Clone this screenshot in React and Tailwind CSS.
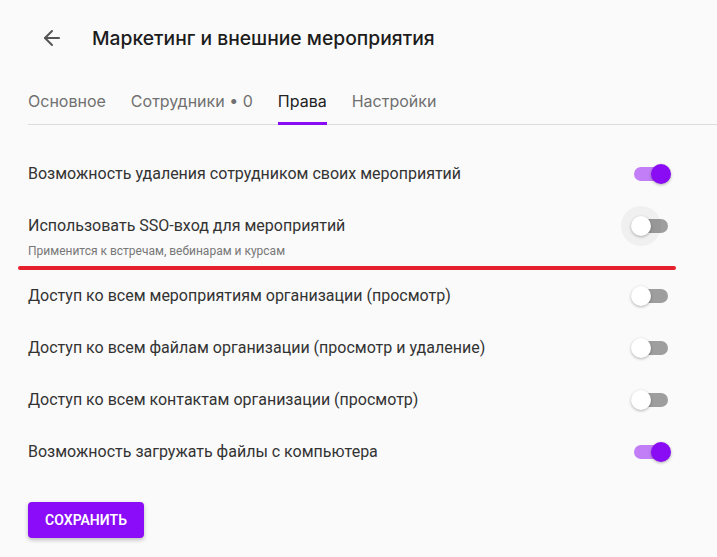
import { ArrowLeft } from "lucide-react";

const rows = [
  { label: "Возможность удаления сотрудником своих мероприятий", on: true },
  {
    label: "Использовать SSO-вход для мероприятий",
    hint: "Применится к встречам, вебинарам и курсам",
    on: false,
    focus: true,
  },
  { label: "Доступ ко всем мероприятиям организации (просмотр)", on: false },
  { label: "Доступ ко всем файлам организации (просмотр и удаление)", on: false },
  { label: "Доступ ко всем контактам организации (просмотр)", on: false },
  { label: "Возможность загружать файлы с компьютера", on: true },
];

const tabs = ["Основное", "Сотрудники • 0", "Права", "Настройки"];

function Switch({ on, focus }) {
  return (
    <div className={`relative w-[34px] h-[14px] rounded-full ${on ? "bg-[#c27ef7]" : "bg-[#9e9e9e]"}`}>
      {focus && (
        <span className="absolute -top-[13px] -left-[13px] w-[40px] h-[40px] rounded-full bg-black/[0.04]" />
      )}
      <span
        className={`absolute -top-[3px] w-[20px] h-[20px] rounded-full shadow-[0_1px_3px_rgba(0,0,0,0.3)] ${
          on ? "-right-[3px] bg-[#8a0cf5]" : "-left-[3px] bg-white"
        }`}
      />
    </div>
  );
}

export default function App() {
  return (
    <div className="min-h-[557px] bg-[#fafafa] font-['Inter',sans-serif]">
      <div className="flex items-center h-[76px] pl-[40px]">
        <ArrowLeft size={24} strokeWidth={2} className="text-[#555]" />
        <h1 className="ml-[28px] text-[19.3px] font-medium text-[#1c1c1c]">
          Маркетинг и внешние мероприятия
        </h1>
      </div>

      <div className="ml-[28px] border-b border-[#dcdcdc] flex gap-[25px] pt-[11px]">
        {tabs.map((t) => (
          <div
            key={t}
            className={`pb-[7px] text-[16px] leading-[28px] -mb-px border-b-[3px] ${
              t === "Права" ? "border-[#8a0cf5] text-[#222]" : "border-transparent text-[#707070]"
            }`}
          >
            {t}
          </div>
        ))}
      </div>

      <div className="pl-[28px] pr-[49px] pt-[23px] font-['Roboto',sans-serif] text-[16px] text-[#333]">
        {rows.map((r) =>
          r.hint ? (
            <div key={r.label}>
              <div className="mt-[14px] flex items-center justify-between h-[24px]">
                <span className="leading-[24px]">{r.label}</span>
                <Switch on={r.on} focus={r.focus} />
              </div>
              <div className="mt-[5px] text-[12px] leading-[16px] text-[#777]">{r.hint}</div>
              <div className="mt-[7px] -ml-[10px] -mr-[8px] h-[4px] rounded-full bg-[#e3202b]" />
            </div>
          ) : (
            <div key={r.label} className="flex items-center justify-between h-[52px]">
              <span>{r.label}</span>
              <Switch on={r.on} />
            </div>
          )
        )}
        <button className="mt-[24px] w-[116px] h-[36px] rounded-[4px] bg-[#8a0cf8] text-white text-[14px] font-semibold shadow-[0_2px_4px_rgba(0,0,0,0.25)]">
          СОХРАНИТЬ
        </button>
      </div>
    </div>
  );
}
